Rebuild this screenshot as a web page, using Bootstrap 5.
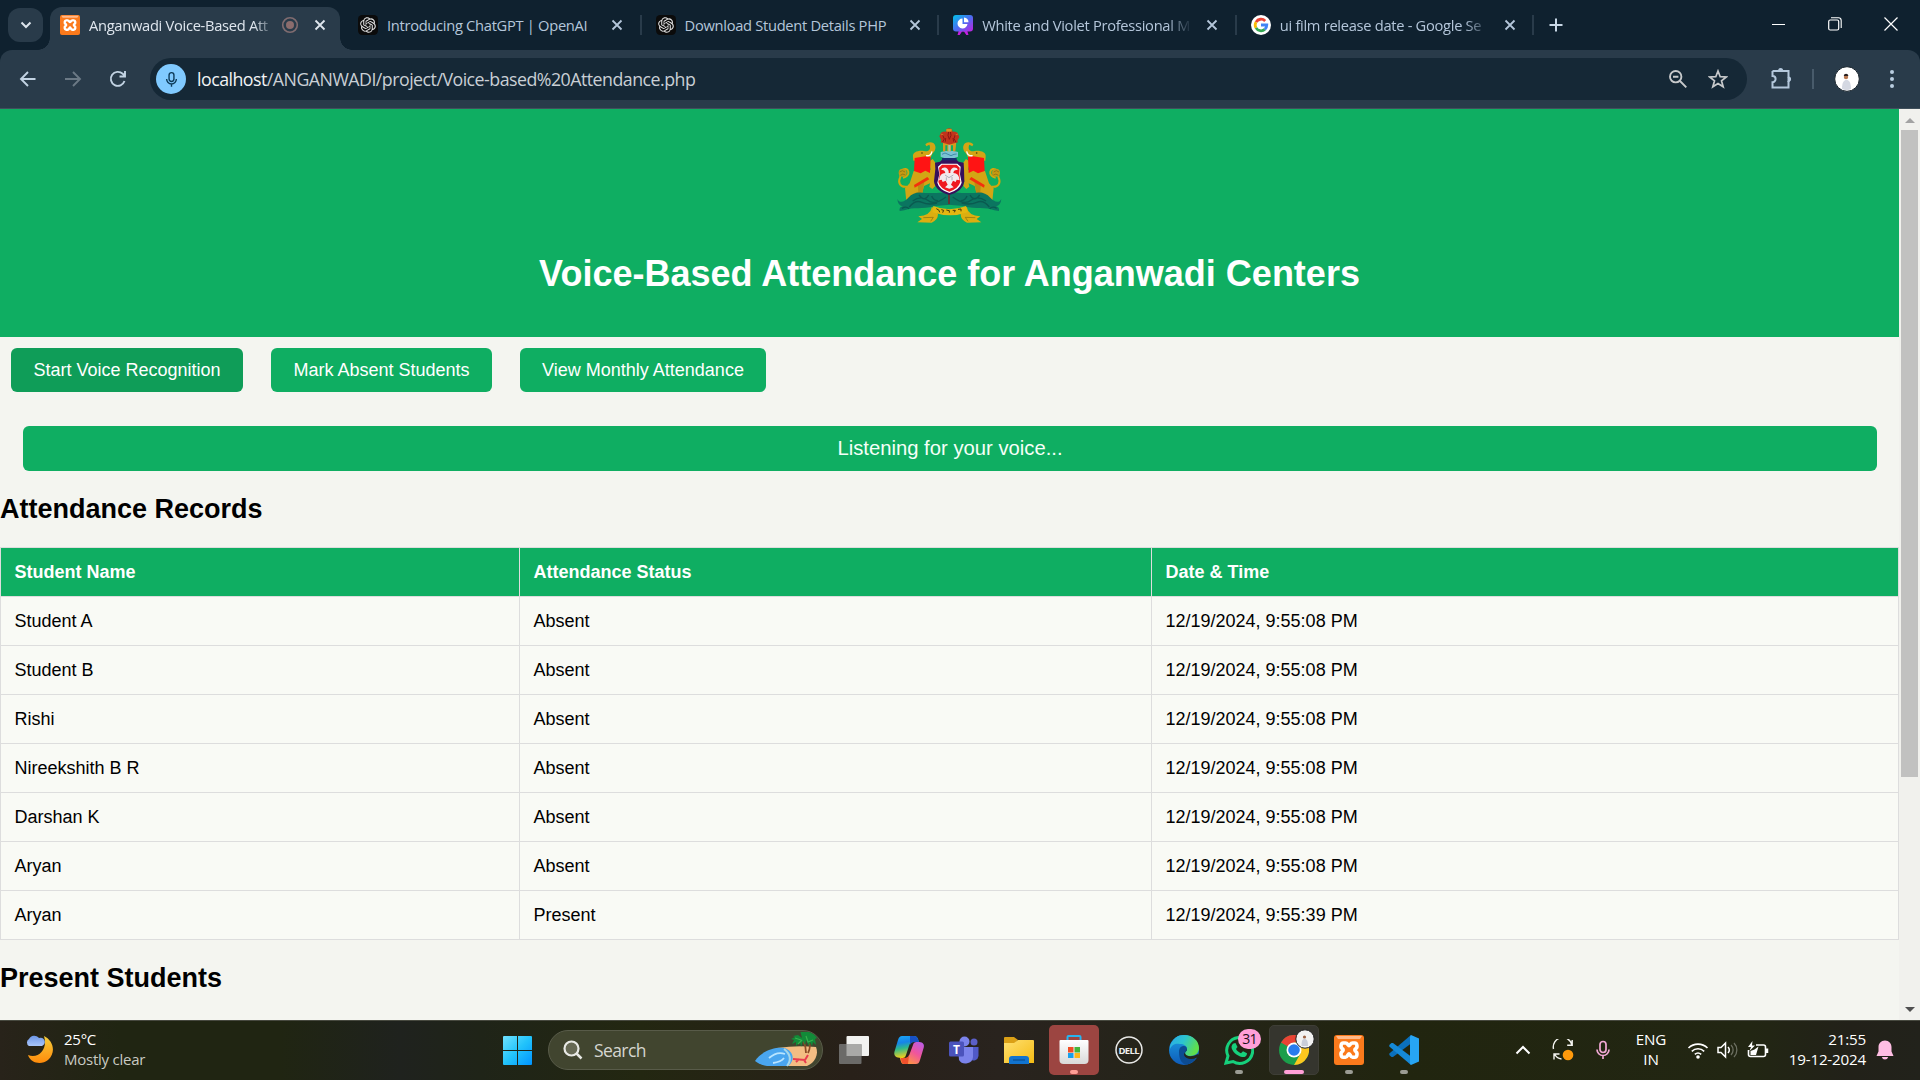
<!DOCTYPE html>
<html lang="en">
<head>
<meta charset="utf-8">
<title>Anganwadi Voice-Based Attendance</title>
<link rel="stylesheet" href="https://cdn.jsdelivr.net/npm/bootstrap@5.3.0/dist/css/bootstrap.min.css">
<style>
html,body{height:100%;overflow:hidden}
body{width:1920px;height:1080px;background:#f4f5f0;font-family:"Liberation Sans",Arial,sans-serif;color:#000;line-height:1.15}
svg{display:block;flex:none}
.ui{font-family:"Open Sans","Noto Sans",sans-serif}
.tabstrip{height:50px;background:#0f212f;padding-left:8px}
.tab-menu{width:35px;height:34px;border-radius:12px;background:#293b4a;margin:8px 7px 0 0}
.tabx{height:43px;width:297.6px;padding:0 9px 7px 18px;color:#b4c6da;font-size:14.7px;letter-spacing:-.3px;margin-top:7px;position:relative}
.tabx .ttl{overflow:hidden;white-space:nowrap;width:210px;margin-left:9px;line-height:24px}
.fade-end{-webkit-mask-image:linear-gradient(90deg,#000 88%,transparent)}
.tabx .cls{margin-left:14px}
.tabx.live{width:290px;padding-left:10px;padding-right:12px;background:#293b4a;color:#dfe6ee;border-radius:12px 12px 0 0}
.tabx.live:before,.tabx.live:after{content:"";position:absolute;bottom:0;width:12px;height:12px}
.tabx.live:before{left:-12px;background:radial-gradient(circle at 0 0,transparent 11.5px,#293b4a 12px)}
.tabx.live:after{right:-12px;background:radial-gradient(circle at 100% 0,transparent 11.5px,#293b4a 12px)}
.tabx.live .ttl{width:187px}
.tabx.live .cls{margin-left:15px}
.divider:after{content:"";position:absolute;right:-4px;top:8px;width:2px;height:20px;background:#293b4a}
.toolbar{height:59px;background:#293b4a;border-bottom:1px solid #40505c;border-radius:12px 12px 0 0;padding:0 18px 0 18px}
.strip-under{background:#0f212f}
.omni{width:1597px;height:42px;border-radius:21px;background:#152836;margin-left:22px;padding:0 19px 0 6px}
.urltxt{font-size:17.8px;letter-spacing:-.52px;color:#c9cfd5;margin-left:11px;line-height:26px}
.urltxt b{font-weight:400;color:#f1f3f5}
.mic-dot{width:30px;height:30px;border-radius:50%;background:#80caff}
.viewport{height:911px;overflow:hidden}
.pagebody{width:1899px}
.hero{height:228px;background:#0fae62;padding-top:6px}
.hero h1{font-size:36px;font-weight:700;color:#fff;margin:18px 0 0;line-height:42px}
.btnrow{padding:11px 11px 0;gap:28px}
.btn-ag{--bs-btn-bg:#0fae62;--bs-btn-color:#fff;background:#0fae62;color:#fff;font-size:18px;line-height:21px;padding:12px 0 11px;border:0;border-radius:6px}
.btn-ag.pressed{background:#0f9d58}
.w1{width:232px}.w2{width:221px}.w3{width:246px}
.listen{margin:34px 22px 0 23px;height:45px;border-radius:6px;background:#0fae62;color:#f5fff8;font-size:20.25px}
h2.sec{font-size:27px;font-weight:700;line-height:32px;margin:0}
.rec{width:1899px;table-layout:fixed;border-collapse:collapse;margin:0}
.rec th,.rec td{border:1px solid #ddd;height:49px;padding:0 14px 0 13.5px;font-size:18px;background:#f9faf5;vertical-align:middle}
.rec th{background:#0fae62;color:#fff;font-weight:700}
.sbar{width:21px;background:#f1f1ed}
.thumb{width:17px;height:647px;background:#c1c1c0}
.taskbar{height:60px;border-top:1px solid #47493f;background:linear-gradient(90deg,#28231a 0,#202512 120px,#202512 280px,#1f221e 400px,#1f2418 480px,#232711 640px,#282019 850px,#29231e 1000px,#25241a 1150px,#21250f 1400px,#222613 1750px,#222119 1850px,#22221b);color:#fff;padding-bottom:1px}
.weather{width:476px;padding-left:24px}
.wtext{font-size:15px;line-height:20px;letter-spacing:-.24px;margin:-3px 0 0 10px}
.srch{width:275px;height:40px;border-radius:20px;background:#41452f;border:1px solid #585b49;margin:0 6px 0 5px;padding-left:14px;color:#d5d6cf;font-size:17.5px;overflow:hidden;letter-spacing:-.6px}
.tile{width:50px;height:50px;border-radius:5px;margin-right:5px;position:relative}
.tile.run:after{content:"";position:absolute;left:21px;bottom:1px;width:8px;height:4px;border-radius:2px;background:#9b9c94}
.tile.alert2{background:#9c4541}.tile.alert2:after{background:#ff9d95}
.tile.act{background:#35352e;border:1px solid #3e3e36}.tile.act:after{left:14px;width:20px;background:#ff9fd8;bottom:0}
.tray{font-size:15.2px;line-height:20px;letter-spacing:-.2px}
.bdg{left:24px;top:4px;width:23px;height:20px;border-radius:10px;background:#ff9fd8;color:#1b1018;font-size:14px;line-height:20px;text-align:center;letter-spacing:-.8px}
</style>
<script src="https://cdn.jsdelivr.net/npm/bootstrap@5.3.0/dist/js/bootstrap.bundle.min.js"></script>
</head>
<body class="d-flex flex-column m-0">
<svg width="0" height="0" class="position-absolute">
<defs>
<symbol id="x" viewBox="0 0 12 12"><path d="M1.500 1.500l9 9M10.500 1.500l-9 9" stroke="currentColor" stroke-width="1.800" fill="none"/></symbol>
<symbol id="gpt" viewBox="0 0 24 24"><rect width="24" height="24" rx="5" fill="#0b0b0b"/><path transform="translate(2.600 2.600) scale(.783)" fill="#e6e6e6" d="M22.2819 9.8211a5.9847 5.9847 0 0 0-.5157-4.9108 6.0462 6.0462 0 0 0-6.5098-2.9A6.0651 6.0651 0 0 0 4.9807 4.1818a5.9847 5.9847 0 0 0-3.9977 2.9 6.0462 6.0462 0 0 0 .7427 7.0966 5.98 5.98 0 0 0 .511 4.9107 6.051 6.051 0 0 0 6.5146 2.9001A5.9847 5.9847 0 0 0 13.2599 24a6.0557 6.0557 0 0 0 5.7718-4.2058 5.9894 5.9894 0 0 0 3.9977-2.9001 6.0557 6.0557 0 0 0-.7475-7.0729zm-9.022 12.6081a4.4755 4.4755 0 0 1-2.8764-1.0408l.1419-.0804 4.7783-2.7582a.7948.7948 0 0 0 .3927-.6813v-6.7369l2.02 1.1686a.071.071 0 0 1 .038.052v5.5826a4.504 4.504 0 0 1-4.4945 4.4944zm-9.6607-4.1254a4.4708 4.4708 0 0 1-.5346-3.0137l.142.0852 4.783 2.7582a.7712.7712 0 0 0 .7806 0l5.8428-3.3685v2.3324a.0804.0804 0 0 1-.0332.0615L9.74 19.9502a4.4992 4.4992 0 0 1-6.1408-1.6464zM2.3408 7.8956a4.485 4.485 0 0 1 2.3655-1.9728V11.6a.7664.7664 0 0 0 .3879.6765l5.8144 3.3543-2.0201 1.1685a.0757.0757 0 0 1-.071 0l-4.8303-2.7865A4.504 4.504 0 0 1 2.3408 7.872zm16.5963 3.8558L13.1038 8.364 15.1192 7.2a.0757.0757 0 0 1 .071 0l4.8303 2.7913a4.4944 4.4944 0 0 1-.6765 8.1042v-5.6772a.79.79 0 0 0-.407-.667zm2.0107-3.0231l-.142-.0852-4.7735-2.7818a.7759.7759 0 0 0-.7854 0L9.409 9.2297V6.8974a.0662.0662 0 0 1 .0284-.0615l4.8303-2.7866a4.4992 4.4992 0 0 1 6.6802 4.66zM8.3065 12.863l-2.02-1.1638a.0804.0804 0 0 1-.038-.0567V6.0742a4.4992 4.4992 0 0 1 7.3757-3.4537l-.142.0805L8.704 5.459a.7948.7948 0 0 0-.3927.6813zm1.0976-2.3654l2.602-1.4998 2.6069 1.4998v2.9994l-2.5974 1.4997-2.6067-1.4997Z"/></symbol>
<symbol id="xampp" viewBox="0 0 30 30"><rect width="30" height="30" rx="3" fill="#fb7a1c"/><path d="M2 1h26l-2 3H4z" fill="#ffb98a"/><path d="M9.200 8h2.300c2 0 2.600 2.600 3.500 2.600S16.500 8 18.500 8h2.300c2.500 0 2.800 4.500 1 5.600-1.300.8-1.300 1.900 0 2.800 1.900 1.200 1.500 5.800-1 5.800h-2.300c-2 0-2.600-3.500-3.500-3.500s-1.500 3.500-3.500 3.500H9.200c-2.500 0-2.900-4.600-1-5.800 1.300-.9 1.300-2 0-2.800C6.400 12.500 6.700 8 9.200 8z" fill="none" stroke="#fff" stroke-width="3.600"/></symbol>
<symbol id="micr" viewBox="0 0 16 20"><rect x="5" y="1.500" width="6" height="11" rx="3" fill="none" stroke="currentColor" stroke-width="1.700"/><path d="M2 9.500a6 6 0 0 0 12 0M8 15.500V19" fill="none" stroke="currentColor" stroke-width="1.700"/></symbol>
<linearGradient id="gw" x2="1" y2="1"><stop stop-color="#70e2ff"/><stop offset=".5" stop-color="#22c3fb"/><stop offset="1" stop-color="#0093ff"/></linearGradient>
<linearGradient id="moon" x2="0" y2="1"><stop stop-color="#f5cf3d"/><stop offset="1" stop-color="#ff8a0a"/></linearGradient>
<linearGradient id="cloud" x2="0" y2="1"><stop stop-color="#6d97e8"/><stop offset="1" stop-color="#a9c6fb"/></linearGradient>
<linearGradient id="canva" x2="1" y2="1"><stop stop-color="#00c4e8"/><stop offset=".5" stop-color="#4a6df2"/><stop offset="1" stop-color="#c41fe0"/></linearGradient>
<linearGradient id="cpa" x1="0" x2=".2" y2="1"><stop stop-color="#1aa8f8"/><stop offset=".35" stop-color="#1684e8"/><stop offset=".6" stop-color="#2fb98a"/><stop offset="1" stop-color="#f2cf1c"/></linearGradient>
<linearGradient id="cpb" x1="1" x2=".3" y2="1"><stop stop-color="#b45df0"/><stop offset=".5" stop-color="#f0559c"/><stop offset="1" stop-color="#ff9b3c"/></linearGradient>
<linearGradient id="edga" x2="1" y2=".4"><stop stop-color="#2aa9ea"/><stop offset=".5" stop-color="#2cc4cf"/><stop offset="1" stop-color="#5fe04c"/></linearGradient>
<linearGradient id="edgb" x2="0" y2="1"><stop stop-color="#1b9de2"/><stop offset="1" stop-color="#0f5bb8"/></linearGradient>
<linearGradient id="fold" x2="1" y2="1"><stop stop-color="#ffe070"/><stop offset="1" stop-color="#f5bb14"/></linearGradient>
<linearGradient id="bag" x2="0" y2="1"><stop stop-color="#fff"/><stop offset="1" stop-color="#d9d9d9"/></linearGradient>
</defs></svg>

<header class="strip-under ui">
<div class="tabstrip d-flex">
  <div class="tab-menu d-flex align-items-center justify-content-center"><svg width="12" height="8" viewBox="0 0 12 8"><path d="M1.500 1.500L6 6l4.500-4.500" fill="none" stroke="#dce4ec" stroke-width="2"/></svg></div>
  <div class="tabx live d-flex align-items-center"><svg width="20" height="20"><use href="#xampp"/></svg><div class="ttl fade-end">Anganwadi Voice-Based Att</div>
    <svg width="18" height="18" viewBox="0 0 18 18" style="margin-left:5px"><circle cx="9" cy="9" r="7.300" fill="none" stroke="#806c70" stroke-width="1.600"/><circle cx="9" cy="9" r="4" fill="#8b6c6d"/></svg>
    <svg class="cls" width="12" height="12"><use href="#x"/></svg></div>
  <div class="tabx divider d-flex align-items-center"><svg width="20" height="20"><use href="#gpt"/></svg><div class="ttl">Introducing ChatGPT | OpenAI</div><svg class="cls" width="12" height="12"><use href="#x"/></svg></div>
  <div class="tabx divider d-flex align-items-center"><svg width="20" height="20"><use href="#gpt"/></svg><div class="ttl">Download Student Details PHP</div><svg class="cls" width="12" height="12"><use href="#x"/></svg></div>
  <div class="tabx divider d-flex align-items-center"><svg width="20" height="20" viewBox="0 0 20 20"><path d="M6 15l-1.500 5h2.200L9 16.500h2l2.300 3.500h2.200L14 15z" fill="#c41fe0"/><rect width="20" height="16.500" rx="3" fill="url(#canva)"/><path d="M9.500 3.500a5 5 0 1 0 5 5.500h-5z" fill="#fff"/><path d="M11 2.500a5 5 0 0 1 4.500 4.800H11z" fill="#fff"/></svg><div class="ttl fade-end">White and Violet Professional M</div><svg class="cls" width="12" height="12"><use href="#x"/></svg></div>
  <div class="tabx divider d-flex align-items-center"><svg width="20" height="20" viewBox="0 0 20 20"><circle cx="10" cy="10" r="10" fill="#fff"/><g fill="none" stroke-width="2.800"><path d="M5 7.100A5.800 5.800 0 0 1 14.200 6" stroke="#ea4335"/><path d="M5 12.900a5.800 5.800 0 0 1 0-5.800" stroke="#fbbc05"/><path d="M13.800 14.400A5.800 5.800 0 0 1 5 12.900" stroke="#34a853"/><path d="M10 10h5.800a5.800 5.800 0 0 1-2 4.400" stroke="#4285f4"/></g></svg><div class="ttl fade-end">ui film release date - Google Se</div><svg class="cls" width="12" height="12"><use href="#x"/></svg></div>
  <svg width="14" height="14" viewBox="0 0 14 14" style="margin:18px 0 0 19px"><path d="M7 .5v13M.5 7h13" stroke="#c8d7e6" stroke-width="2"/></svg>
  <div class="d-flex ms-auto align-items-center" style="padding-right:22px;gap:42px;height:48px"><svg width="14" height="14"><path d="M0 7.500h13" stroke="#fff"/></svg><svg width="14" height="14" viewBox="0 0 14 14"><rect x=".7" y="3" width="10" height="10" rx="1.500" fill="none" stroke="#fff" stroke-width="1.200"/><path d="M3 .8h7.500A2.800 2.800 0 0 1 13.200 3.500V11" fill="none" stroke="#fff" stroke-width="1.100"/></svg><svg width="14" height="14"><path d="M.5.5l13 13M13.500.5l-13 13" stroke="#fff" stroke-width="1.200"/></svg></div>
</div>
<div class="toolbar d-flex align-items-center">
  <svg width="20" height="20" viewBox="0 0 20 20"><path d="M17.500 10H3M10 3l-7 7 7 7" fill="none" stroke="#c2d3e3" stroke-width="1.900"/></svg>
  <svg width="20" height="20" viewBox="0 0 20 20" style="margin-left:25px"><path d="M2 10h15M10 3l7 7-7 7" fill="none" stroke="#6b7985" stroke-width="1.900"/></svg>
  <svg width="20" height="20" viewBox="0 0 20 20" style="margin-left:25px"><path d="M16.500 12a7 7 0 1 1-1.800-7.200L17 7M17 2v5.500h-5.500" fill="none" stroke="#c2d3e3" stroke-width="1.900"/></svg>
  <div class="omni d-flex align-items-center">
    <div class="mic-dot d-flex align-items-center justify-content-center" style="color:#0c3a58"><svg width="13" height="17"><use href="#micr"/></svg></div>
    <div class="urltxt"><b>localhost</b>/ANGANWADI/project/Voice-based%20Attendance.php</div>
    <div class="d-flex ms-auto" style="gap:20px"><svg width="20" height="20" viewBox="0 0 20 20"><circle cx="7.700" cy="7.700" r="5.700" fill="none" stroke="#c7c9cb" stroke-width="1.900"/><path d="M5 7.700h5.400M12 12l6.300 6.300" stroke="#c7c9cb" stroke-width="1.900"/></svg><svg width="20" height="20" viewBox="0 0 20 20"><path d="M10 2l2.200 5.700 6.100.3-4.800 3.800 1.700 6L10 14.500l-5.200 3.300 1.700-6L1.700 8l6.100-.3z" fill="none" stroke="#c7c9cb" stroke-width="1.700"/></svg></div>
  </div>
  <svg width="22" height="24" viewBox="0 0 22 24" style="margin-left:23px;margin-top:-2px"><path d="M2.500 5h16v6.500M18.500 15v6.500h-16v-5.300a3 3 0 0 0 0-6.200V5" fill="none" stroke="#b4c8dc" stroke-width="2"/><path d="M8 5a2.600 3 0 0 1 5.200 0zM18.500 10.500a2.600 2.600 0 0 1 0 5.200z" fill="#b4c8dc"/><path d="M18.500 11v5" stroke="#b4c8dc" stroke-width="2"/></svg>
  <div style="width:2px;height:20px;background:#485b6b;margin-left:20px"></div>
  <svg width="26" height="26" viewBox="0 0 26 26" style="margin-left:20px"><circle cx="13" cy="13" r="12.300" fill="#fff" stroke="#17232c"/><path d="M8 23c0-7 2-9 4.500-9s4.500 2 4.500 9c-2.500 1.500-6 1.500-9 0z" fill="#d4d8e2"/><circle cx="12" cy="11" r="2.200" fill="#b97850"/><path d="M9.800 10c0-3 4.500-3 4.500 0z" fill="#2a2020"/></svg>
  <svg width="6" height="20" viewBox="0 0 6 20" class="ms-auto" style="margin-right:7px"><g fill="#b9cde0"><circle cx="3" cy="3" r="2"/><circle cx="3" cy="10" r="2"/><circle cx="3" cy="17" r="2"/></g></svg>
</div>
</header>

<main class="viewport d-flex">
<div class="pagebody">
  <div class="hero text-center">
    <svg class="mx-auto" width="160" height="120" viewBox="0 0 480 360">
      <g id="beast">
        <path d="M112 215c-24 4-28-14-22-27 3-8 0-12 5-20 8-10 18-6 20 2 2 10-6 16-16 18" fill="none" stroke="#d3a70a" stroke-width="6"/>
        <circle cx="98" cy="173" r="12" fill="#c69a12"/><path d="M89 171q8-8 16 0M91 181q7-7 15-1" stroke="#7d6a10" stroke-width="2" fill="none"/>
        <path d="M131 168l51-4-6-24 12-8 11 15 3 20-9 32 3 14-9 9-9-7 2-10-18 8-9 35-25 8-15 21H99l-2-11 12-7-4-39 14-15z" fill="#d3a514"/>
        <path d="M163 200l-7 44h-17l-5-9 11-5-2-25z" fill="#bb8c12"/>
        <path d="M129 125c-2-14 17-20 33-17 14 4 22-6 16-19l-9 5-3-6c7-8 18-8 25-3 10 10 5 24-4 31l-6 13-15 6-36 2z" fill="#d3a514"/>
        <path d="M134 129l32-5 16 2-2 48-14-7-14 8-20-7z" fill="#ff1414"/><path d="M132 210l40-24 6 7-44 25z" fill="#f4300d"/>
        <path d="M168 122q15 2 18-13" stroke="#fff" stroke-width="4" fill="none"/><circle cx="156" cy="114" r="2.500" fill="#493b0a"/>
        <path d="M82 252c8 16 24 6 33-4 13-15 30-18 50-14 24 0 46 0 75-3v38l-45 4c-40 12-64 1-92 13l-14 2c-2-9 4-13 9-14-10-2-15-10-16-22z" fill="#0b7560"/>
        <path d="M128 258q25-18 45-2t55-10M118 276q18-23 38-14t45 2M147 240q16 23 29 0M96 280q12-8 21 1M185 243q5 14 19 14" stroke="#0a5a50" stroke-width="4" fill="none"/>
        <path d="M186 275q-5 27-41 29l11 8-14 10 43 1q19-8 19-26z" fill="#dcae10"/><path d="M160 308l30-1-8 12" stroke="#85700d" stroke-width="2" fill="none"/>
      </g>
      <use href="#beast" transform="matrix(-1 0 0 1 476 0)"/>
      <path d="M190 273q48 20 98 0l5 19q-52 18-106 0z" fill="#e4b710"/><path d="M199 281l8 5 2 6M214 284l7 2-3 7M229 285l9 2v6M248 286h8l-3 6M264 283l9-1v7" fill="none" stroke="#43380b" stroke-width="3"/>
      <path d="M237 235v32" stroke="#8a1820" stroke-width="4"/>
      <path d="M218 133h40l8 7 15 3 1 19 1 37q-4 30-45 41-42-11-46-41l4-37-1-19 15-3z" fill="#36105c"/>
      <path d="M214 146h48l10 9-2 23 5 25q-6 21-37 31-31-10-36-31l6-25-4-23z" fill="#fff"/><path d="M216 149h44l9 9-1 20 3 23q-6 20-33 29-28-9-33-29l4-23-2-20z" fill="#ef1820"/>
      <path d="M216 160q14-8 20 8v6h5v-6q6-16 20-8l2 5q-12-2-13 9 17 0 19 22l-9-2-3 7-8-4-6 12 8 8-13 4-13-4 8-8-6-12-9 4-3-7-8 2q2-22 19-22-2-11-12-9z" fill="#f2e9ee"/><path d="M225 180l12 8 13-8M229 187v10M246 186v10" stroke="#aeb1bc" stroke-width="3" fill="none"/>
      <path d="M212 111q26-8 52 0v14q-26 12-52 0z" fill="#7cc2d4"/><path d="M216 118q9-8 18 0t18 0l8-1" stroke="#408ca8" stroke-width="3" fill="none"/><path d="M216 129h44v7h-44z" fill="#172f72"/>
      <path d="M219 80h40l-3 29h-7V91h-6v18h-11V91h-6v18h-7z" fill="#d59a1e"/><path d="M235 88h6v22h-6z" fill="#9fc6ae"/>
      <path d="M213 53q8-5 15-3l2-8q8-5 15 0l3 8q9-2 15 4l5 12-6 11 2 5-17 4-9 3-9-3-17-4 2-6-6-12z" fill="#c1341c"/><path d="M218 60l5 12-5 9M236 50l-2 11 4 12 5-12-2-11M256 59l-4 12 6 11M227 69l-1 11M249 69l2 11" stroke="#8a1612" stroke-width="3" fill="none"/><path d="M230 43h14v6h-14zM212 57l8 3M264 57l-8 3" stroke="#d89a24" stroke-width="2" fill="#d89a24"/>
    </svg>
    <h1>Voice-Based Attendance for Anganwadi Centers</h1>
  </div>
  <div class="btnrow d-flex"><button class="btn btn-ag pressed w1">Start Voice Recognition</button><button class="btn btn-ag w2">Mark Absent Students</button><button class="btn btn-ag w3">View Monthly Attendance</button></div>
  <div class="listen d-flex align-items-center justify-content-center">Listening for your voice...</div>
  <h2 class="sec" style="padding:22px 0">Attendance Records</h2>
  <table class="rec">
    <colgroup><col style="width:519px"><col style="width:632px"><col></colgroup>
    <thead><tr><th>Student Name</th><th>Attendance Status</th><th>Date &amp; Time</th></tr></thead>
    <tbody>
    <tr><td>Student A</td><td>Absent</td><td>12/19/2024, 9:55:08 PM</td></tr>
    <tr><td>Student B</td><td>Absent</td><td>12/19/2024, 9:55:08 PM</td></tr>
    <tr><td>Rishi</td><td>Absent</td><td>12/19/2024, 9:55:08 PM</td></tr>
    <tr><td>Nireekshith B R</td><td>Absent</td><td>12/19/2024, 9:55:08 PM</td></tr>
    <tr><td>Darshan K</td><td>Absent</td><td>12/19/2024, 9:55:08 PM</td></tr>
    <tr><td>Aryan</td><td>Absent</td><td>12/19/2024, 9:55:08 PM</td></tr>
    <tr><td>Aryan</td><td>Present</td><td>12/19/2024, 9:55:39 PM</td></tr>
    </tbody>
  </table>
  <h2 class="sec" style="padding-top:22px">Present Students</h2>
</div>
<div class="sbar d-flex flex-column align-items-center"><svg width="10" height="21" viewBox="0 0 10 21"><path d="M0 14l5-5 5 5z" fill="#a3a3a3"/></svg><div class="thumb"></div><svg class="mt-auto" width="10" height="21" viewBox="0 0 10 21"><path d="M0 8l5 5 5-5z" fill="#505050"/></svg></div>
</main>

<footer class="taskbar d-flex align-items-center ui">
  <div class="weather d-flex align-items-center"><svg width="30" height="30" viewBox="0 0 30 30" style="margin-top:-3px"><path d="M20 2c10 5 12 17 4 24-6 5-17 4-20-5 11 4 20-6 16-19z" fill="url(#moon)"/><path d="M5 12a4 4 0 0 1 0-7 6 6 0 0 1 10-1 4 4 0 0 1 3 8z" fill="url(#cloud)"/></svg><div class="wtext">25°C<br><span style="color:#c9cac2">Mostly clear</span></div></div>
  <div class="d-flex justify-content-center" style="width:67px;padding-left:16px"><svg width="29" height="29" viewBox="0 0 29 29"><path d="M0 1q0-1 1-1h13v14H0zM15 0h13q1 0 1 1v13H15zM0 15h14v14H1q-1 0-1-1zM15 15h14v13q0 1-1 1H15z" fill="url(#gw)"/></svg></div>
  <div class="srch d-flex align-items-center"><svg width="20" height="20" viewBox="0 0 20 20"><circle cx="8.500" cy="8.500" r="7" fill="#666954" stroke="#e8e9e5" stroke-width="2.200"/><path d="M13.500 13.500l5 5" stroke="#e8e9e5" stroke-width="2.500"/></svg><span style="margin-left:11px">Search</span>
    <svg class="ms-auto" width="66" height="36" viewBox="0 0 66 36" style="margin-right:1px"><path d="M22 16q20-3 39-1c3 7-1 16-9 19H18z" fill="#f3bd83"/><path d="M0 29c8-11 20-14 29-13 9 2 12 12 4 18H12C6 33 3 31 0 29z" fill="#4aa6ef"/><path d="M29 17q10 8 3 17" stroke="#a8d8e8" stroke-width="2" fill="none"/><path d="M14 26q8-7 16-4M18 31q8-1 11-5" stroke="#b9e5ff" stroke-width="1.800" fill="none"/><path d="M51 21q0-7-3-13M53 21q3-6 1-10" stroke="#8b4c26" stroke-width="1.800" fill="none"/><path d="M47 6l-4-3-5 1 2 1-4 2 3 1-2 4 4-2v4l4-4 1 5 2-6 2 4 1-5 3 6 1-4 2 4 1-4 3 3-1-6 2-1-3-4 1-1-5-1-4-2-2 1-4-1z" fill="#128a38"/><path d="M40 6l6 2M43 12l4-4M51 4l2 6 5-2" stroke="#38b04d" stroke-width="1.200" fill="none"/><path d="M38 27l12 1 3-5M41 30l3-3M51 31l-2-3" stroke="#e83c50" stroke-width="2" fill="none"/></svg></div>
  <div class="tile d-flex align-items-center justify-content-center"><svg width="30" height="28" viewBox="0 0 30 28"><rect x="7.500" width="22.500" height="20" rx="1" fill="#f2f2f0"/><rect y="8" width="22.500" height="20" rx="1" fill="#6b6a68"/><rect x="7.500" y="8" width="15" height="12" fill="#a9a9a7"/></svg></div>
  <div class="tile d-flex align-items-center justify-content-center"><svg width="30" height="28" viewBox="0 0 30 28"><path d="M8 0h12c3 0 4 2 5 6h-5c-3 0-4 1-5 4l-3 9c-1 3-2 3-5 3-6 0-8-3-6-8l3-10C5 1 6 0 8 0z" fill="url(#cpa)"/><path d="M16 0h4c3 0 4 3 5 6h-5c-2 0-3 1-4 3z" fill="#1750c4"/><path d="M22 28H10c-2 0-3-1-4-6h5c3 0 4-2 5-5l3-8c1-3 2-3 5-3 6 0 7 3 5 8l-3 10c-1 3-2 4-4 4z" fill="url(#cpb)"/><path d="M14 28h-4c-2 0-3-3-3-6h4c2 0 3-1 4-3z" fill="#f0502c"/></svg></div>
  <div class="tile d-flex align-items-center justify-content-center"><svg width="30" height="28" viewBox="0 0 30 28"><circle cx="15.500" cy="5.500" r="5" fill="#7b83eb"/><circle cx="25" cy="6" r="3.500" fill="#5b5fc7"/><path d="M21 11h8.500v9a5 5 0 0 1-8.500 3z" fill="#5059c9"/><path d="M9 11h15v10a7.500 7 0 0 1-14 3z" fill="#7b83eb"/><rect y="5.500" width="15" height="15" rx="1.500" fill="#4b53bc"/><text x="7.500" y="17.500" text-anchor="middle" font-size="12" font-weight="700" fill="#fff">T</text></svg></div>
  <div class="tile d-flex align-items-center justify-content-center"><svg width="30" height="28" viewBox="0 0 30 28"><path d="M0 2q0-1 1-1h9l4 3-4 4H0z" fill="#dba016"/><path d="M0 7h10l4-3h15q1 0 1 1v22H0z" fill="url(#fold)"/><path d="M5 28v-5q0-3 3-3h14q3 0 3 3v5z" fill="#1173cf"/><path d="M9 24h12" stroke="#0b549d" stroke-width="1.500"/></svg></div>
  <div class="tile run alert2 d-flex align-items-center justify-content-center"><svg width="30" height="30" viewBox="0 0 30 30"><path d="M8.500 6V2q0-1 1-1h11q1 0 1 1v4" fill="none" stroke="#27b4f0" stroke-width="2"/><path d="M.5 6q0-1 1-1h27q1 0 1 1v19q0 4-4 4h-21q-4 0-4-4z" fill="url(#bag)"/><path d="M9 12h5.500v5.500H9z" fill="#f04e26"/><path d="M15.500 12H21v5.500h-5.500z" fill="#44b53a"/><path d="M9 18h5.500v5H9z" fill="#18a0ec"/><path d="M15.500 18H21v5h-5.500z" fill="#ffb61a"/></svg></div>
  <div class="tile d-flex align-items-center justify-content-center"><svg width="28" height="28" viewBox="0 0 28 28"><circle cx="14" cy="14" r="13" fill="none" stroke="#e8e8e6" stroke-width="1.500"/><text x="14" y="17.500" text-anchor="middle" font-size="9.500" font-weight="700" fill="#f0f0ee" textLength="21">DELL</text></svg></div>
  <div class="tile d-flex align-items-center justify-content-center"><svg width="30" height="30" viewBox="0 0 30 30"><circle cx="15" cy="15" r="15" fill="url(#edgb)"/><path d="M1 11C4 3 9 0 15 0c9 0 15 6 15 13 0 5-4 8-9 8-3 0-5-1-5-3 0-1 2-2 2-4 0-3-3-5-7-5C7 8 3 9 1 14z" fill="url(#edga)"/><path d="M10 17c0-4 2-6 5-6 2 0 3 1.500 3 3.500 0 1.500-2 2-2 3.500 0 4 7 5 12 3-3 6-8 9-12 8.500-4-2-6-6-6-12.500z" fill="#0c4b92"/><path d="M18 14c0 2-2 2.500-2 4 0 3 6 5 13 1l1 3-3 1c-4 2-12 1-12-4z" fill="#25261a"/></svg></div>
  <div class="tile run d-flex align-items-center justify-content-center"><svg width="30" height="30" viewBox="0 0 30 30"><path d="M2 28l2-7A13 13 0 1 1 9 26.500z" fill="none" stroke="#16d07c" stroke-width="3"/><path d="M9.500 8.500l2-.5 2 4-1.500 2c1 2 3 3.500 5 4.200l2-2 4 2c0 3-2.500 4.300-5 3.800-5-1-10.500-6-10.500-10 0-1.500 1-3 2-3.500z" fill="#16d07c"/></svg><span class="bdg position-absolute">31</span></div>
  <div class="tile run act d-flex align-items-center justify-content-center"><svg width="30" height="30" viewBox="0 0 30 30"><circle cx="15" cy="15" r="15" fill="#1b9e4b"/><path d="M15 15L2 7.500A15 15 0 0 1 28 7.500H15z" fill="#e94334"/><path d="M28 7.500a15 15 0 0 1-13 22.500L21.500 18.500 15 7.500z" fill="#fcc71f"/><circle cx="15" cy="15" r="7.500" fill="#fff"/><circle cx="15" cy="15" r="5.800" fill="#287bed"/></svg><svg class="position-absolute" style="left:25px;top:3px" width="20" height="20" viewBox="0 0 20 20"><circle cx="10" cy="10" r="9.200" fill="#f2f2f2" stroke="#222" stroke-width="1"/><path d="M6.500 17c0-6 1-7 3-7s3.500 1 3.500 7z" fill="#c9cdd8"/><circle cx="9.500" cy="8" r="1.600" fill="#9c6444"/></svg></div>
  <div class="tile run d-flex align-items-center justify-content-center"><svg width="30" height="30"><use href="#xampp"/></svg></div>
  <div class="tile run d-flex align-items-center justify-content-center"><svg width="30" height="30" viewBox="0 0 30 30"><path d="M22 0v8.500L4 22 2.500 22 .3 20v-1.500z" fill="#0b70bd"/><path d="M22 30v-8.500L4 8 2.500 8 .3 10v1.500z" fill="#1589d8"/><path d="M22 0l8 3.500v23L22 30l-1-1.500V1.500z" fill="#27a5f3"/></svg></div>
  <div class="tray d-flex align-items-center ms-auto" style="padding-right:26px">
    <svg width="16" height="10" viewBox="0 0 16 10"><path d="M1.500 8.500L8 2l6.500 6.500" fill="none" stroke="#fff" stroke-width="2"/></svg>
    <svg width="22" height="22" viewBox="0 0 22 22" style="margin-left:21px"><path d="M1.500 10A9 9 0 0 1 20 6M20.200 1v5.200h-5M9.500 20a9 9 0 0 1-7-5M2 20.500v-5.500h5.500" fill="none" stroke="#f4f4f0" stroke-width="1.400"/><circle cx="16" cy="16" r="5.300" fill="#ff9a0c"/></svg>
    <svg width="16" height="20" style="margin-left:21px;color:#f2a9d5"><use href="#micr"/></svg>
    <div class="text-center" style="width:44px;margin:-2px 0 0 18px">ENG<br>IN</div>
    <svg width="22" height="18" viewBox="0 0 22 18" style="margin-left:14px"><path d="M1.500 7a13.500 13.500 0 0 1 19 0M4.800 10.300a9 9 0 0 1 12.400 0M7.800 13.400a4.800 4.800 0 0 1 6.400 0" fill="none" stroke="#fff" stroke-width="1.600"/><circle cx="11" cy="16" r="1.800" fill="#fff"/></svg>
    <svg width="21" height="18" viewBox="0 0 21 18" style="margin-left:8px"><path d="M1 6.500h3L8.500 2v14L4 11.500H1z" fill="none" stroke="#fff" stroke-width="1.500"/><path d="M11 6a4.500 4.500 0 0 1 0 6" fill="none" stroke="#fff" stroke-width="1.500"/><path d="M14 4a7 7 0 0 1 0 10M17 2a10 10 0 0 1 0 14" fill="none" stroke="#6c6f61" stroke-width="1.300"/></svg>
    <svg width="22" height="18" viewBox="0 0 22 18" style="margin-left:9px"><path d="M9 4h7.500q2 0 2 2v7.500q0 2-2 2H3.500q-2 0-2-2V9" fill="none" stroke="#fff" stroke-width="1.600"/><path d="M20 7.500v4.500" stroke="#fff" stroke-width="2.500"/><path d="M3.500 10l4-1.500 4-3L9 14H3.500zM5.500 0L1 6h3l-1.500 4L8 4.500H5z" fill="#fff"/></svg>
    <div class="text-end" style="width:97px;margin-top:-3px">21:55<br>19-12-2024</div>
    <svg width="18" height="20" viewBox="0 0 18 20" style="margin-left:10px"><path d="M9 .5c4 0 6.500 3 6.500 6.500v4.500L17.500 16H.5l2-4.500V7C2.500 3.500 5 .5 9 .5zM5.800 17h6.400q-.8 2.500-3.200 2.500T5.800 17z" fill="#ffbde3"/></svg>
  </div>
</footer>
</body>
</html>
